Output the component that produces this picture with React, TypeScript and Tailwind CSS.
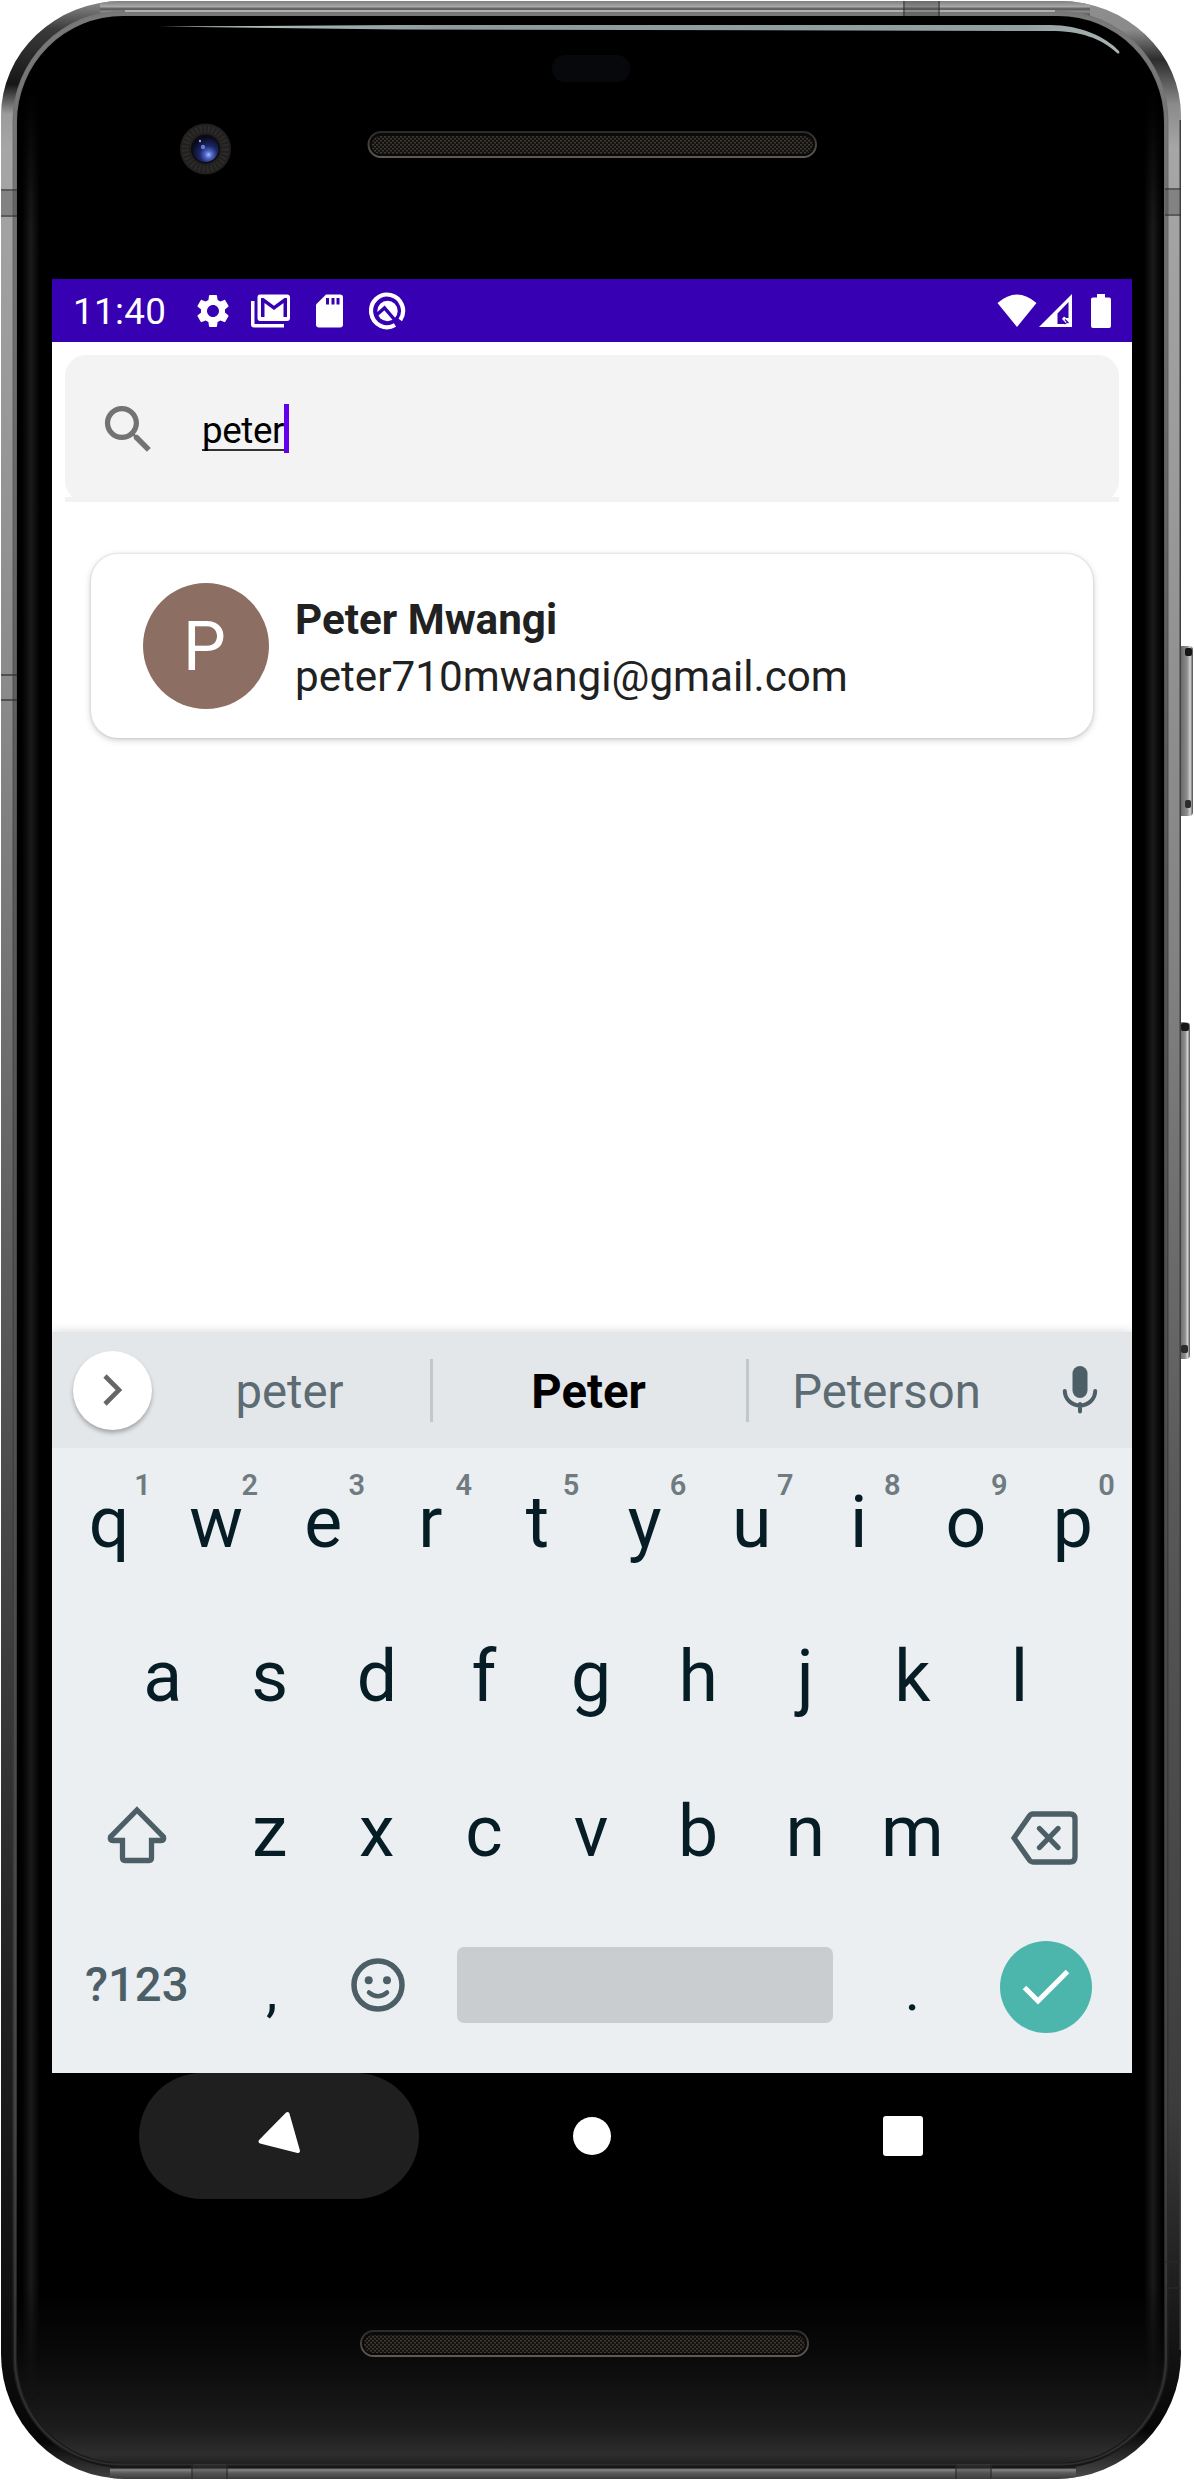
import React from "react";

const ROW_ONE = [
  ["q", "1"],
  ["w", "2"],
  ["e", "3"],
  ["r", "4"],
  ["t", "5"],
  ["y", "6"],
  ["u", "7"],
  ["i", "8"],
  ["o", "9"],
  ["p", "0"],
];
const ROW_TWO = ["a", "s", "d", "f", "g", "h", "j", "k", "l"];
const ROW_THREE = ["z", "x", "c", "v", "b", "n", "m"];

/** Speaker slot with its metal mesh. */
function Speaker({ x, y, w }: { x: number; y: number; w: number }) {
  return (
    <g>
      <rect x={x + 1} y={y + 1} width={w - 2} height={25} rx={12.5} fill="#0b0a09" stroke="url(#slotEdge)" strokeWidth={2} />
      <rect x={x + 4} y={y + 5} width={w - 8} height={18} rx={9} fill="url(#mesh)" />
    </g>
  );
}

/** Metal body, glass, camera, speakers and side buttons. */
function PhoneShell() {
  return (
    <svg className="absolute inset-0" width="1194" height="2480" viewBox="0 0 1194 2480" fill="none">
      <defs>
        <linearGradient id="metalL" x1="0" y1="0" x2="0" y2="2480" gradientUnits="userSpaceOnUse">
          <stop offset="0" stopColor="#8f8f8f" />
          <stop offset="0.012" stopColor="#3a3a3a" />
          <stop offset="0.034" stopColor="#161616" />
          <stop offset="0.046" stopColor="#9c9c9c" />
          <stop offset="0.06" stopColor="#a6a6a6" />
          <stop offset="0.28" stopColor="#8a8a8a" />
          <stop offset="0.55" stopColor="#555555" />
          <stop offset="0.8" stopColor="#212121" />
          <stop offset="0.95" stopColor="#0c0c0c" />
          <stop offset="0.985" stopColor="#060606" />
          <stop offset="1" stopColor="#444444" />
        </linearGradient>
        <linearGradient id="rimV" x1="0" y1="0" x2="0" y2="2480" gradientUnits="userSpaceOnUse">
          <stop offset="0" stopColor="#777777" />
          <stop offset="0.35" stopColor="#4c4c4c" />
          <stop offset="0.85" stopColor="#333333" />
          <stop offset="0.95" stopColor="#1c1c1c" />
          <stop offset="1" stopColor="#161616" />
        </linearGradient>
        <linearGradient id="metalR" x1="0" y1="0" x2="0" y2="2480" gradientUnits="userSpaceOnUse">
          <stop offset="0" stopColor="#8f8f8f" />
          <stop offset="0.012" stopColor="#8a8a8a" />
          <stop offset="0.024" stopColor="#2c2c2c" />
          <stop offset="0.042" stopColor="#8a8a8a" />
          <stop offset="0.06" stopColor="#a6a6a6" />
          <stop offset="0.2" stopColor="#9a9a9a" />
          <stop offset="0.4" stopColor="#808080" />
          <stop offset="0.6" stopColor="#595959" />
          <stop offset="0.85" stopColor="#3c3c3c" />
          <stop offset="0.955" stopColor="#101010" />
          <stop offset="0.98" stopColor="#060606" />
          <stop offset="1" stopColor="#4c4c4c" />
        </linearGradient>
        <linearGradient id="metalT" x1="0" y1="1" x2="0" y2="17" gradientUnits="userSpaceOnUse">
          <stop offset="0" stopColor="#7e7e7e" />
          <stop offset="0.35" stopColor="#a8a8a8" />
          <stop offset="0.5" stopColor="#555555" />
          <stop offset="0.65" stopColor="#8a8a8a" />
          <stop offset="0.85" stopColor="#5c5c5c" />
          <stop offset="1" stopColor="#1a1a1a" />
        </linearGradient>
        <linearGradient id="metalB" x1="0" y1="2462" x2="0" y2="2479" gradientUnits="userSpaceOnUse">
          <stop offset="0" stopColor="#1a1a1a" />
          <stop offset="0.35" stopColor="#1e1e1e" />
          <stop offset="0.45" stopColor="#858585" />
          <stop offset="0.65" stopColor="#5a5a5a" />
          <stop offset="1" stopColor="#3a3a3a" />
        </linearGradient>
        <linearGradient id="glass" x1="0" y1="2290" x2="0" y2="2463" gradientUnits="userSpaceOnUse">
          <stop offset="0" stopColor="#000000" />
          <stop offset="0.4" stopColor="#0a0a0a" />
          <stop offset="0.8" stopColor="#1c1c1c" />
          <stop offset="0.95" stopColor="#2e2e2e" />
          <stop offset="1" stopColor="#222222" />
        </linearGradient>
        <linearGradient id="sheenL" x1="22" y1="0" x2="40" y2="0" gradientUnits="userSpaceOnUse">
          <stop offset="0" stopColor="#1a1a1a" stopOpacity="0" />
          <stop offset="0.5" stopColor="#1a1a1a" />
          <stop offset="1" stopColor="#1a1a1a" stopOpacity="0" />
        </linearGradient>
        <linearGradient id="sheenR" x1="1144" y1="0" x2="1162" y2="0" gradientUnits="userSpaceOnUse">
          <stop offset="0" stopColor="#1a1a1a" stopOpacity="0" />
          <stop offset="0.5" stopColor="#1a1a1a" />
          <stop offset="1" stopColor="#1a1a1a" stopOpacity="0" />
        </linearGradient>
        <linearGradient id="fadeY" x1="0" y1="90" x2="0" y2="2400" gradientUnits="userSpaceOnUse">
          <stop offset="0" stopColor="#000000" />
          <stop offset="0.06" stopColor="#ffffff" />
          <stop offset="0.95" stopColor="#ffffff" />
          <stop offset="1" stopColor="#000000" />
        </linearGradient>
        <mask id="sheenMask" maskUnits="userSpaceOnUse" x="0" y="0" width="1194" height="2480">
          <rect width="1194" height="2480" fill="url(#fadeY)" />
        </mask>
        <linearGradient id="gloss" x1="160" y1="0" x2="1120" y2="0" gradientUnits="userSpaceOnUse">
          <stop offset="0" stopColor="#bccccb" />
          <stop offset="0.3" stopColor="#8d999b" />
          <stop offset="0.9" stopColor="#93a0a1" />
          <stop offset="1" stopColor="#a9b3b4" />
        </linearGradient>
        <linearGradient id="slotEdge" x1="0" y1="0" x2="0" y2="1">
          <stop offset="0" stopColor="#2c2b2b" />
          <stop offset="1" stopColor="#5d5955" />
        </linearGradient>
        <linearGradient id="button" x1="0" y1="0" x2="1" y2="0">
          <stop offset="0" stopColor="#6d6d6d" />
          <stop offset="0.4" stopColor="#6e6e6e" />
          <stop offset="0.7" stopColor="#8e8e8e" />
          <stop offset="0.85" stopColor="#d4d4d4" />
          <stop offset="1" stopColor="#4a4a4a" />
        </linearGradient>
        <radialGradient id="lens" cx="0.62" cy="0.72" r="0.75">
          <stop offset="0" stopColor="#a9bdf7" />
          <stop offset="0.18" stopColor="#5068c8" />
          <stop offset="0.45" stopColor="#1d2766" />
          <stop offset="0.9" stopColor="#070a1c" />
        </radialGradient>
        <pattern id="mesh" width="4" height="4" patternUnits="userSpaceOnUse">
          <rect width="4" height="4" fill="#12110f" />
          <rect x="0.4" y="0" width="1.3" height="1.5" fill="#575047" />
          <rect x="2.4" y="2" width="1.3" height="1.5" fill="#575047" />
        </pattern>
        <clipPath id="body">
          <path d="M122 1H1060A121 115 0 0 1 1181 116V2354A125 125 0 0 1 1056 2479H126A125 125 0 0 1 1 2354V116A121 115 0 0 1 122 1Z" />
        </clipPath>
      </defs>

      <rect x="1174" y="646" width="19" height="170" rx="4" fill="url(#button)" />
      <rect x="1185" y="648" width="7" height="8" rx="2" fill="#161616" />
      <rect x="1185" y="800" width="6" height="8" rx="2" fill="#2b2b2b" />
      <rect x="1174" y="1022" width="16" height="337" rx="4" fill="url(#button)" />
      <rect x="1181" y="1023" width="8" height="8" rx="2" fill="#161616" />
      <rect x="1181" y="1345" width="7" height="8" rx="2" fill="#2b2b2b" />

      <g clipPath="url(#body)">
        <rect x="0" y="0" width="591" height="2480" fill="url(#metalL)" />
        <rect x="591" y="0" width="603" height="2480" fill="url(#metalR)" />
        <rect x="100" y="0" width="990" height="17" fill="url(#metalT)" />
        <rect x="110" y="2462" width="966" height="18" fill="url(#metalB)" />
        <rect x="1179.5" y="120" width="1.5" height="2230" fill="#3f3f3f" />
        <rect x="12.5" y="11" width="1156" height="2457" rx="110" fill="url(#rimV)" />
        <rect x="125" y="10" width="930" height="2" fill="#b0b0b0" />
        <rect x="15" y="14.5" width="1151" height="2450" rx="106" stroke="#8a8a8a" strokeOpacity="0.2" strokeWidth="2" />
        <path d="M1 191H17V215H1ZM1165 190H1181V214H1165ZM905 1H938V16H905ZM193 2464H226V2479H193ZM957 2464H990V2479H957Z" fill="#444444" fillOpacity="0.35" />
        <path
          d="M1 190H17M1 216H17M1 675H17M1 700H17M1165 189H1181M1165 215H1181M1165 2262H1181M1165 2288H1181M904 1V16M939 1V16M192 2464V2479M227 2464V2479M956 2464V2479M991 2464V2479"
          stroke="#2b2b2b"
          strokeOpacity="0.8"
          strokeWidth="1.5"
        />
      </g>

      <rect x="17" y="16" width="1147" height="2447" rx="106" fill="url(#glass)" />
      <g mask="url(#sheenMask)">
        <rect x="22" y="90" width="18" height="2310" fill="url(#sheenL)" />
        <rect x="1144" y="90" width="18" height="2310" fill="url(#sheenR)" />
      </g>

      <path d="M160 26.5L400 25H1050C1080 25 1106 37 1119 51C1120 54 1119 54 1117 53C1101 38 1080 31 1050 31L400 29.5Z" fill="url(#gloss)" />
      <rect x="552" y="55" width="78" height="27" rx="13" fill="#07080c" />

      <circle cx="205.5" cy="149" r="25.5" fill="#221f1f" />
      <circle cx="205.5" cy="149" r="20" stroke="#2d2a2a" strokeWidth="7" strokeDasharray="2 2" />
      <circle cx="205.5" cy="149" r="14.5" fill="#0b0b10" />
      <circle cx="205.5" cy="149" r="13" fill="url(#lens)" />
      <circle cx="203" cy="147" r="2.2" fill="#5f7be0" />
      <circle cx="200" cy="141" r="1.2" fill="#8ea0e8" />

      <Speaker x={367.5} y={131} w={449.5} />
      <Speaker x={360} y={2330} w={449} />
    </svg>
  );
}

function StatusBar() {
  return (
    <div className="flex h-[63px] items-center bg-[#3700b3] pr-[21px] pl-[21px] text-white">
      <span className="w-[120px] pt-1 text-[36.75px] leading-none tracking-[0.35px]">11:40</span>
      <svg width="40" height="40" viewBox="0 0 24 24" fill="currentColor">
        <path d="M19.14 12.94c.04-.3.06-.61.06-.94 0-.32-.02-.64-.07-.94l2.03-1.58c.18-.14.23-.41.12-.61l-1.92-3.32c-.12-.22-.37-.29-.59-.22l-2.39.96c-.5-.38-1.03-.7-1.62-.94l-.36-2.54c-.04-.24-.24-.41-.48-.41h-3.84c-.24 0-.43.17-.47.41l-.36 2.54c-.59.24-1.13.57-1.62.94l-2.39-.96c-.22-.08-.47 0-.59.22L2.74 8.87c-.12.21-.08.47.12.61l2.03 1.58c-.05.3-.09.63-.09.94s.02.64.07.94l-2.03 1.58c-.18.14-.23.41-.12.61l1.92 3.32c.12.22.37.29.59.22l2.39-.96c.5.38 1.03.7 1.62.94l.36 2.54c.05.24.24.41.48.41h3.84c.24 0 .44-.17.47-.41l.36-2.54c.59-.24 1.13-.56 1.62-.94l2.39.96c.22.08.47 0 .59-.22l1.92-3.32c.12-.22.07-.47-.12-.61l-2.01-1.58zM12 15.6c-1.98 0-3.6-1.62-3.6-3.6s1.62-3.6 3.6-3.6 3.6 1.62 3.6 3.6-1.62 3.6-3.6 3.6z" />
      </svg>
      <svg className="ml-[18px]" width="40" height="34" viewBox="0 0 40 34" fill="currentColor">
        <path d="M0 7H3.5V30H33V33.5H3Q0 33.5 0 30.5Z" />
        <path
          fillRule="evenodd"
          d="M9 .5H36Q39 .5 39 3.5V24Q39 27 36 27H9Q6.500 27 6.500 24V3.500Q6.500 .5 9 .5ZM10 23H13.500V9L23 16L32.500 9V23H36V4H33.500L23 11.800L12.500 4H10Z"
        />
      </svg>
      <svg className="ml-[25px]" width="27" height="34" viewBox="0 0 27 34">
        <path fill="currentColor" d="M10 .5H24Q27 .5 27 3.500V30.500Q27 33.500 24 33.500H3Q0 33.500 0 30.500V10.500Z" />
        <path d="M11.500 4V10.500M17 4V10.500M22 4V10.500" stroke="#3700b3" strokeWidth="3" />
      </svg>
      <svg className="mr-px ml-[26px]" width="38" height="38" viewBox="0 0 38 38" fill="none">
        <circle cx="18.500" cy="19" r="10.200" fill="currentColor" />
        <path d="M7.500 23L15.500 16L31 34" stroke="#3700b3" strokeWidth="3.400" />
        <path d="M31.300 28A16 16.300 0 1 0 26 33" stroke="currentColor" strokeWidth="4.200" />
      </svg>
      <div className="flex-1" />
      <svg width="40" height="34" viewBox="0 0 40 34" fill="currentColor">
        <path d="M20 33L.5 9Q20-8 39.500 9Z" />
      </svg>
      <svg className="ml-[2px]" width="34" height="34" viewBox="0 0 34 34">
        <path fill="currentColor" d="M0 33L33 0V33Z" />
        <path fill="#3700b3" d="M18.500 19.500L29.500 8V24L27 24L25 22.500L23 25L26 28V30H18.500Z" />
        <path stroke="#3700b3" strokeWidth="1.200" d="M26 25.500L29.500 29M28 28.500L25.500 30" />
      </svg>
      <svg className="ml-[18px]" width="20" height="34" viewBox="0 0 20 34" fill="currentColor">
        <path d="M6 0H14V3.500H18Q20 3.500 20 5.500V32Q20 34 18 34H2Q0 34 0 32V5.500Q0 3.500 2 3.500H6Z" />
      </svg>
    </div>
  );
}

function SearchField() {
  return (
    <div className="relative mx-[13px] mt-[13px] flex h-[147px] items-center rounded-[21px] bg-[#f3f3f3] pl-8">
      <svg className="mt-[2px]" width="63" height="63" viewBox="0 0 24 24" fill="#737373">
        <path d="M15.500 14h-.79l-.28-.27C15.410 12.590 16 11.110 16 9.500 16 5.910 13.090 3 9.500 3S3 5.910 3 9.500 5.910 16 9.500 16c1.610 0 3.090-.59 4.230-1.570l.27.28v.79l5 4.990L20.490 19l-4.990-5zm-6 0C7.010 14 5 11.990 5 9.500S7.010 5 9.500 5 14 7.010 14 9.500 11.990 14 9.500 14z" />
      </svg>
      <div className="ml-[42px] flex h-[49px] items-center">
        <span className="mt-[4px] -mb-[2px] h-[39px] border-b-2 border-[#333333] text-[36.75px] leading-[38px] tracking-[-0.4px] text-black">
          peter
        </span>
        <span className="h-[49px] w-[5px] bg-[#6200ee]" />
      </div>
      <div className="absolute inset-x-0 bottom-0 h-[5px] bg-[#f2f2f2]" />
    </div>
  );
}

function ResultCard() {
  return (
    <div className="mt-[52px] mr-[39px] ml-[39px] flex h-[184px] items-center rounded-[27px] bg-white pl-[52px] shadow-[0_2px_7px_rgba(0,0,0,0.2),0_0_3px_rgba(0,0,0,0.14)]">
      <div className="flex size-[126px] items-center justify-center rounded-full bg-[#8d6e63] pt-[1px] pr-[3px] text-[68px] leading-none text-white">
        P
      </div>
      <div className="ml-[26px] flex flex-col pt-[4px] text-[42.2px] leading-[57px] text-[#212121]">
        <span className="font-bold">Peter Mwangi</span>
        <span>peter710mwangi@gmail.com</span>
      </div>
    </div>
  );
}

function SuggestionStrip() {
  return (
    <div className="flex h-[116px] items-center bg-[#e3e7ea] pl-[21px] text-[47.25px] leading-none text-[#5d6b72]">
      <div className="flex size-[79px] items-center justify-center rounded-full bg-white shadow-[0_3px_4px_rgba(0,0,0,0.28)]">
        <svg width="20" height="32" viewBox="0 0 20 32" fill="none">
          <path d="M2 2L16 16L2 30" stroke="#666666" strokeWidth="4.600" />
        </svg>
      </div>
      <span className="w-[278px] pt-[6px] pr-[3px] text-center">peter</span>
      <span className="h-[63px] w-[3px] bg-[#c2c7ca]" />
      <span className="w-[313px] pt-[6px] pr-[2px] text-center font-bold text-black">Peter</span>
      <span className="h-[63px] w-[3px] bg-[#c2c7ca]" />
      <span className="w-[277px] pt-[6px] pr-[2px] text-center">Peterson</span>
      <svg className="ml-[36px]" width="36" height="50" viewBox="0 0 36 50" fill="none">
        <rect x="10.500" y="1" width="15" height="32" rx="7.500" fill="#4c5e66" />
        <path d="M2.800 26A15.200 14.500 0 0 0 33.200 26M18 39V46.500" stroke="#4c5e66" strokeWidth="4" strokeLinecap="round" />
      </svg>
    </div>
  );
}

function Key({ label, hint }: { label: string; hint?: string }) {
  return (
    <div className="relative flex h-full w-[107.1px] items-center justify-center text-[71.500px] leading-none text-[#061d26]">
      {label}
      {hint && (
        <span className="absolute top-[23px] right-[5px] w-[30px] text-center text-[29px] leading-[29px] font-semibold text-[#6f7b81]">
          {hint}
        </span>
      )}
    </div>
  );
}

function Keyboard() {
  return (
    <div className="bg-[#ebeff2] shadow-[0_-2px_8px_rgba(0,0,0,0.12)]">
      <SuggestionStrip />
      <div className="flex flex-col items-center pr-[2px] pb-[9px]">
        <div className="flex h-[149px]">
          {ROW_ONE.map(([label, hint]) => (
            <Key key={label} label={label} hint={hint} />
          ))}
        </div>
        <div className="flex h-[160px]">
          {ROW_TWO.map((label) => (
            <Key key={label} label={label} />
          ))}
        </div>
        <div className="flex h-[149px] items-center">
          <div className="flex w-[160.7px] justify-center pt-[6px] pl-[2px]">
            <svg width="60" height="58" viewBox="0 0 60 58" fill="none">
              <path
                d="M30 4L56.500 31Q57.500 34.500 54 34.500H44.500V52Q44.500 54.500 42 54.500H18Q15.500 54.500 15.500 52V34.500H6Q2.500 34.500 3.500 31Z"
                stroke="#4c5e66"
                strokeWidth="5.300"
              />
            </svg>
          </div>
          {ROW_THREE.map((label) => (
            <Key key={label} label={label} />
          ))}
          <div className="flex w-[160.7px] justify-center pt-[12px] pr-[3px]">
            <svg width="67" height="54" viewBox="0 0 67 54" fill="none">
              <path d="M22 3H59Q64 3 64 8V46Q64 51 59 51H22Q19.500 51 18 48.500L3 27L18 5.500Q19.500 3 22 3Z" stroke="#4c5e66" strokeWidth="5.300" />
              <path d="M28.500 17.500L47 36.500M47 17.500L28.500 36.500" stroke="#4c5e66" strokeWidth="5.300" strokeLinecap="round" />
            </svg>
          </div>
        </div>
        <div className="flex h-[158px] items-center">
          <span className="w-[160.7px] pt-[2px] pl-[2px] text-center text-[47.25px] leading-none font-medium text-[#4c5e66]">?123</span>
          <span className="w-[107.1px] pt-[10px] pl-[4px] text-center text-[58px] leading-none text-[#061d26]">,</span>
          <div className="flex w-[107.1px] justify-center pl-[2px]">
            <svg width="54" height="54" viewBox="0 0 54 54" fill="none" stroke="#4c5e66">
              <circle cx="27" cy="27" r="24" strokeWidth="5.500" />
              <circle cx="17.700" cy="22.300" r="4" fill="#4c5e66" stroke="none" />
              <circle cx="36" cy="22.300" r="4" fill="#4c5e66" stroke="none" />
              <path d="M18 34.500Q27 42 36 34.500" strokeWidth="4.500" strokeLinecap="round" />
            </svg>
          </div>
          <div className="flex w-[428.400px] justify-center">
            <div className="h-[76px] w-[376px] rounded-[7px] bg-[#c9cdd0]" />
          </div>
          <span className="w-[107.1px] pt-[10px] text-center text-[58px] leading-none text-[#061d26]">.</span>
          <div className="flex w-[160.7px] justify-center pt-1">
            <div className="flex size-[92px] items-center justify-center rounded-full bg-[#4db6ac]">
              <svg width="48" height="36" viewBox="0 0 48 36" fill="none">
                <path d="M2.500 18.500L16 32L45.500 2.500" stroke="#ffffff" strokeWidth="5" />
              </svg>
            </div>
          </div>
        </div>
      </div>
    </div>
  );
}

function NavigationBar() {
  return (
    <div className="flex h-[126px] items-center">
      <div className="ml-[87px] flex h-[126px] w-[280px] items-center justify-center rounded-[63px] bg-[#1f1f1f]">
        <svg width="44" height="44" viewBox="0 0 44 44" className="-mt-[8px]">
          <path d="M30.500 4L41 41L3.500 31.500Z" fill="#ffffff" stroke="#ffffff" strokeWidth="4" strokeLinejoin="round" />
        </svg>
      </div>
      <div className="ml-[154px] size-[38px] rounded-full bg-white" />
      <div className="ml-[272px] size-[40px] rounded-[3px] bg-white" />
    </div>
  );
}

export default function App() {
  return (
    <div className="relative h-[2480px] w-[1194px] overflow-hidden bg-white pt-[279px] pl-[52px] font-['Roboto',sans-serif]">
      <PhoneShell />
      <main className="relative flex h-[1920px] w-[1080px] flex-col">
        <div className="flex h-[1794px] flex-col overflow-hidden bg-white">
          <StatusBar />
          <SearchField />
          <ResultCard />
          <div className="flex-1" />
          <Keyboard />
        </div>
        <NavigationBar />
      </main>
    </div>
  );
}
